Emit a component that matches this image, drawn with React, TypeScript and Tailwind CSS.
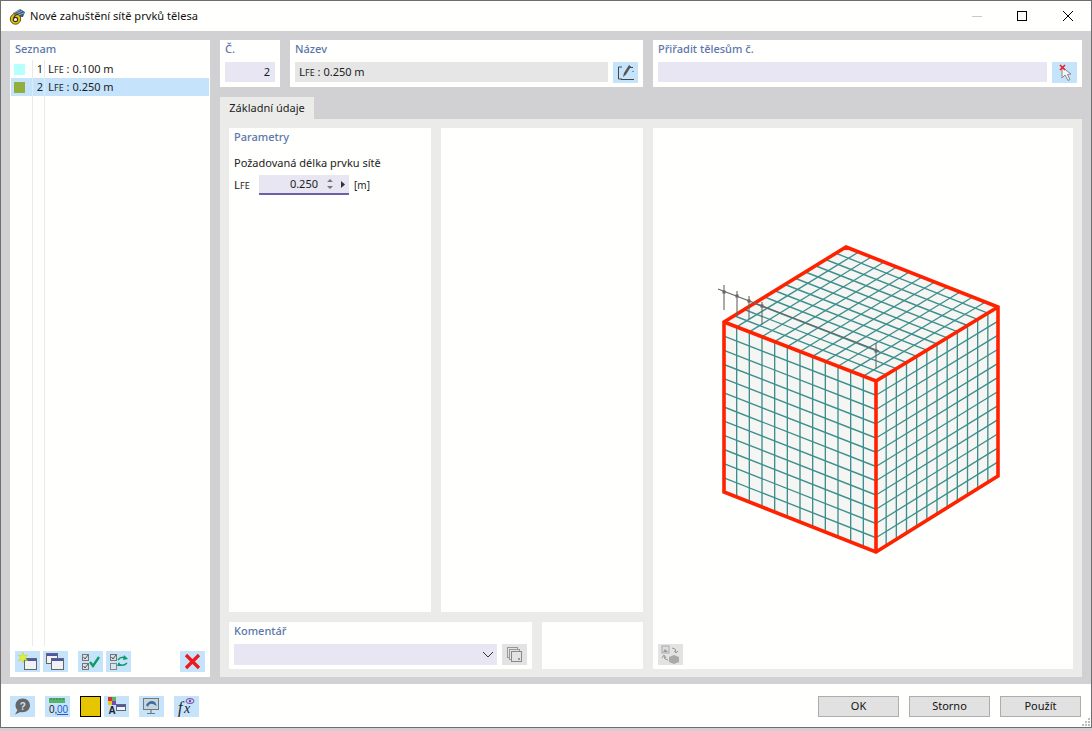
import React from "react";

type P = { x: number; y: number };
const V = {
  top: { x: 846, y: 247 },
  left: { x: 724, y: 322 },
  right: { x: 998, y: 307 },
  front: { x: 876, y: 381 },
  lb: { x: 724, y: 492 },
  rb: { x: 998, y: 476 },
  bottom: { x: 876, y: 552 },
};
const lerp = (a: P, b: P, t: number): P => ({ x: a.x + (b.x - a.x) * t, y: a.y + (b.y - a.y) * t });
const steps = Array.from({ length: 11 }, (_, i) => (i + 1) / 12);

function FaceGrid({ a, b, c, d }: { a: P; b: P; c: P; d: P }) {
  return (
    <>
      {steps.map((t) => {
        const p = lerp(a, b, t), q = lerp(d, c, t), r = lerp(a, d, t), s = lerp(b, c, t);
        return (
          <g key={t}>
            <line x1={p.x} y1={p.y} x2={q.x} y2={q.y} />
            <line x1={r.x} y1={r.y} x2={s.x} y2={s.y} />
          </g>
        );
      })}
    </>
  );
}

function Cube() {
  const poly = (...ps: P[]) => ps.map((p) => `${p.x},${p.y}`).join(" ");
  const ticks = [
    [724, 285, 310, 292],
    [737, 291, 316, 296],
    [749, 296, 319, 301],
    [762, 302, 324, 306],
    [876, 343, 368, 351],
  ];
  return (
    <svg viewBox="653 128 420 516" className="block w-[420px] h-[516px]">
      <polygon points={poly(V.top, V.right, V.front, V.left)} fill="#f5f6f3" />
      <polygon points={poly(V.left, V.front, V.bottom, V.lb)} fill="#f5f6f3" />
      <polygon points={poly(V.front, V.right, V.rb, V.bottom)} fill="#f5f6f3" />
      <g stroke="#3c8f8d" strokeWidth="1.35">
        <FaceGrid a={V.left} b={V.top} c={V.right} d={V.front} />
        <FaceGrid a={V.left} b={V.front} c={V.bottom} d={V.lb} />
        <FaceGrid a={V.front} b={V.right} c={V.rb} d={V.bottom} />
      </g>
      <g fill="none" stroke="#ff2200" strokeWidth="3.6" strokeLinejoin="miter">
        <polygon points={poly(V.top, V.right, V.rb, V.bottom, V.lb, V.left)} />
        <polyline points={poly(V.left, V.front, V.right)} />
        <line x1={V.front.x} y1={V.front.y} x2={V.bottom.x} y2={V.bottom.y} />
      </g>
      <g stroke="#666" strokeWidth="1.1" fill="#666">
        <line x1="718" y1="289" x2="879" y2="351" />
        {ticks.map(([x, a, b, m]) => (
          <g key={x}>
            <line x1={x} y1={a} x2={x} y2={b} />
            <rect x={x - 1} y={m - 1} width="2" height="2" />
          </g>
        ))}
      </g>
    </svg>
  );
}

function L() {
  return (
    <span className="text-[11.5px]">
      L<span className="text-[9px]">FE</span>
    </span>
  );
}

function IconBtn({ children, gray, className = "" }: { children?: React.ReactNode; gray?: boolean; className?: string }) {
  return (
    <div className={`w-[25px] h-[21px] shrink-0 flex items-center justify-center ${gray ? "bg-[#e3e3e3]" : "bg-[#c5e3fa]"} ${className}`}>
      {children}
    </div>
  );
}

const Svg = ({ children }: { children: React.ReactNode }) => (
  <svg viewBox="0 0 25 21" className="block w-[25px] h-[21px]">{children}</svg>
);

const Win = ({ x, y, w = 12, h = 11, fill = "#f0f2f5" }: { x: number; y: number; w?: number; h?: number; fill?: string }) => (
  <g>
    <rect x={x + 0.5} y={y + 0.5} width={w} height={h} fill={fill} stroke="#666" />
    <rect x={x + 1} y={y + 1} width={w - 1} height="2" fill="#4a55b8" />
  </g>
);

const Check = ({ x, y, c = "#555" }: { x: number; y: number; c?: string }) => (
  <g>
    <rect x={x + 0.5} y={y + 0.5} width="6" height="6" fill="#d8dde2" stroke="#777" />
    <path d={`M${x + 1.5} ${y + 3}l1.5 2 3-4`} stroke={c} strokeWidth="1" fill="none" />
  </g>
);

function AppIcon() {
  return (
    <svg viewBox="0 0 17 17" className="block w-[17px] h-[17px] shrink-0">
      <path d="M4 5 L11 1 L16 4 L14 9 L7 9 Z" fill="#3c5a80" />
      <path d="M5 5 L11 2 M7 6 L13 3 M9 7 L15 5" stroke="#9fc0dc" strokeWidth="0.8" />
      <circle cx="6.5" cy="11" r="5.2" fill="#e9c400" stroke="#5c5320" />
      <circle cx="6.5" cy="11.5" r="2.2" fill="#fff6c0" stroke="#333" strokeWidth="1.2" />
      <path d="M5 10 Q5.5 6.5 9 6.5" stroke="#333" strokeWidth="1.2" fill="none" />
    </svg>
  );
}

const Label = ({ children }: { children: React.ReactNode }) => (
  <div className="text-[11px] leading-[14px] font-medium text-[#5b76ac]">{children}</div>
);

function App() {
  return (
    <div className="w-[1092px] h-[731px] bg-[#d0d0d3] overflow-hidden text-[11px] text-[#1c1c1c] font-['Noto_Sans','Open_Sans',sans-serif]">
      <div className="relative w-[1092px] h-[728px] flex flex-col border border-[#6e6e6e] bg-[#d1d1d4]">
        {/* Title bar */}
        <div className="h-[30px] shrink-0 bg-[#fffffd] flex items-center pl-[8px]">
          <AppIcon />
          <div className="ml-[4px] text-[11.1px] text-[#111]">Nové zahuštění sítě prvků tělesa</div>
          <div className="flex-1" />
          <div className="w-[10px] h-px bg-[#c9c9c9] mr-[35px]" />
          <div className="w-[10px] h-[10px] border-[1.5px] border-black mr-[36px]" />
          <svg viewBox="0 0 10 10" className="block w-[10px] h-[10px] mr-[18px]">
            <path d="M0 0 L10 10 M10 0 L0 10" stroke="#000" strokeWidth="1" />
          </svg>
        </div>

        {/* Body */}
        <div className="flex-1 min-h-0 flex gap-[10px] pl-[9px] pr-[9px] pt-[9px] pb-[7px]">
          {/* Left list */}
          <div className="w-[200px] shrink-0 bg-[#fffffd] flex flex-col">
            <div className="px-[5px] pt-[2px] h-[20px]">
              <Label>Seznam</Label>
            </div>
            <div className="flex-1 min-h-0 flex flex-col px-px">
              <ListRow color="#b5ffff" n="1" text=" : 0.100 m" />
              <ListRow color="#94ae3e" n="2" text=" : 0.250 m" selected />
              <div className="flex-1 grid grid-cols-[22px_12px_1fr]">
                <div className="border-r border-[#e9e9e9]" />
                <div className="border-r border-[#e9e9e9]" />
                <div />
              </div>
            </div>
            <div className="h-[31px] shrink-0 flex pl-[5px] pt-[5px]">
              <IconBtn>
                <Svg>
                  <Win x={9} y={7} w={12} h={11} />
                  <path d="M8 1 L9.2 4.6 L13 4 L10.4 6.8 L12.6 10 L9 8.8 L8 12 L6.6 8.8 L3 10 L5.4 6.8 L3 4 L6.8 4.6 Z" fill="#dcef3c" stroke="#b7c92e" strokeWidth="0.4" />
                </Svg>
              </IconBtn>
              <IconBtn className="ml-[3px]">
                <Svg>
                  <Win x={3} y={2} w={11} h={10} />
                  <Win x={8} y={7} w={12} h={11} />
                </Svg>
              </IconBtn>
              <IconBtn className="ml-[10px]">
                <Svg>
                  <Check x={4} y={3} />
                  <Check x={4} y={12} />
                  <path d="M12 11 L15 15 L21 6" stroke="#0d9c6a" strokeWidth="2.4" fill="none" />
                </Svg>
              </IconBtn>
              <IconBtn className="ml-[3px]">
                <Svg>
                  <Check x={4} y={3} />
                  <rect x="4.5" y="12.5" width="6" height="6" fill="#d8e4ee" stroke="#888" />
                  <path d="M12 9 Q15 5 20 7 M12 13 Q17 16 21 12" stroke="#0d9c6a" strokeWidth="1.5" fill="none" />
                  <path d="M18 4 L22 8 L17 9 Z M13 11 L11 15 L15 15 Z" fill="#0d9c6a" />
                </Svg>
              </IconBtn>
              <IconBtn className="ml-[49px]">
                <Svg>
                  <path d="M6 4 L19 17 M19 4 L6 17" stroke="#f01818" strokeWidth="3.2" />
                </Svg>
              </IconBtn>
            </div>
          </div>

          {/* Right */}
          <div className="flex-1 min-w-0 flex flex-col">
            <div className="h-[47px] shrink-0 flex gap-[10px]">
              <div className="w-[60px] bg-[#fffffd] px-[5px] pt-[2px]">
                <Label>Č.</Label>
                <div className="mt-[6px] h-[20px] bg-[#e7e6f2] flex items-center justify-end pr-[5px]">2</div>
              </div>
              <div className="w-[353px] bg-[#fffffd] px-[5px] pt-[2px]">
                <Label>Název</Label>
                <div className="mt-[6px] flex gap-[5px]">
                  <div className="flex-1 h-[20px] bg-[#e6e6e6] flex items-center px-[4px]">
                    <span><L /> : 0.250 m</span>
                  </div>
                  <IconBtn>
                    <Svg>
                      <path d="M9 5 H5.5 V17 H9 M8 17.5 H21 M17 5.5 H20 M20 9 V10" stroke="#444" strokeWidth="1" fill="none" />
                      <path d="M10 15 L11 11 L16 3 L18 4.5 L13 12.5 Z" fill="#555" />
                    </Svg>
                  </IconBtn>
                </div>
              </div>
              <div className="flex-1 bg-[#fffffd] px-[5px] pt-[2px]">
                <Label>Přiřadit tělesům č.</Label>
                <div className="mt-[6px] flex gap-[5px]">
                  <div className="flex-1 h-[20px] bg-[#e7e6f2]" />
                  <IconBtn>
                    <Svg>
                      <path d="M10 5 L10 16 L13 13 L16 18.5 L18 17.5 L15.5 12.5 L19 12 Z" fill="#f4f4f4" stroke="#888" strokeWidth="1" />
                      <path d="M8 3 L13 8 M13 3 L8 8" stroke="#ee1c25" strokeWidth="1.6" />
                    </Svg>
                  </IconBtn>
                </div>
              </div>
            </div>

            {/* Tab */}
            <div className="mt-[10px] h-[22px] shrink-0 flex">
              <div className="w-[94px] bg-[#ebecea] flex items-center justify-center text-[#222]">Základní údaje</div>
            </div>

            <div className="flex-1 min-h-0 bg-[#ebecea] flex gap-[10px] pl-[9px] pr-[9px] pt-[9px] pb-[8px]">
              <div className="w-[414px] shrink-0 flex flex-col gap-[10px]">
                <div className="flex-1 min-h-0 flex gap-[10px]">
                  <div className="w-[202px] bg-[#fffffd] px-[5px] pt-[2px]">
                    <Label>Parametry</Label>
                    <div className="mt-[12px] leading-[14px] text-[#1c1c1c]">Požadovaná délka prvku sítě</div>
                    <div className="mt-[5px] flex items-center">
                      <div className="w-[25px]"><L /></div>
                      <div className="w-[90px] h-[20px] bg-[#e7e6f2] border-b-2 border-[#6c5fa7] flex items-center justify-end">
                        <span>0.250</span>
                        <svg viewBox="0 0 8 12" className="block w-[8px] h-[12px] ml-[8px] mr-[7px]">
                          <path d="M4 1 L7 4 H1 Z M4 11 L7 8 H1 Z" fill="#777" />
                        </svg>
                        <svg viewBox="0 0 4 7" className="block w-[4px] h-[7px] mr-[4px]">
                          <path d="M0 0 L4 3.5 L0 7 Z" fill="#333" />
                        </svg>
                      </div>
                      <div className="ml-[5px] text-[10px]">[m]</div>
                    </div>
                  </div>
                  <div className="w-[202px] bg-[#fffffd]" />
                </div>
                <div className="h-[47px] shrink-0 flex gap-[10px]">
                  <div className="w-[303px] bg-[#fffffd] px-[5px] pt-[2px]">
                    <Label>Komentář</Label>
                    <div className="mt-[6px] flex gap-[5px]">
                      <div className="flex-1 h-[21px] bg-[#e7e6f2] flex items-center justify-end pr-[3px]">
                        <svg viewBox="0 0 12 7" className="block w-[12px] h-[7px]">
                          <path d="M1 1 L6 6 L11 1" stroke="#333" strokeWidth="1" fill="none" />
                        </svg>
                      </div>
                      <IconBtn gray>
                        <Svg>
                          <rect x="5.5" y="3.5" width="10" height="10" fill="none" stroke="#999" />
                          <rect x="7.5" y="5.5" width="10" height="10" fill="#e3e3e3" stroke="#999" />
                          <rect x="9.5" y="7.5" width="10" height="10" fill="#e3e3e3" stroke="#888" />
                          <rect x="16" y="14" width="2" height="2" fill="#999" />
                        </Svg>
                      </IconBtn>
                    </div>
                  </div>
                  <div className="flex-1 bg-[#fffffd]" />
                </div>
              </div>

              <div className="flex-1 bg-[#fffffd] flex flex-col">
                <Cube />
                <div className="pl-[5px]">
                  <IconBtn gray>
                    <Svg>
                      <rect x="4" y="2" width="7" height="7" fill="#ddd" stroke="#aaa" />
                      <path d="M5 8 L7 5 L10 8 Z" fill="#999" />
                      <path d="M14 4 Q18 4 18 8 M16 7 L18 9 L20 7 M10 16 Q6 16 6 12 M4 14 L6 11 L8 14" stroke="#999" fill="none" />
                      <path d="M11 13 L16 11 L21 13 V18 L16 20 L11 18 Z" fill="#aaa" />
                    </Svg>
                  </IconBtn>
                </div>
              </div>
            </div>
          </div>
        </div>

        {/* Footer */}
        <div className="h-[43px] shrink-0 bg-[#fffffd] flex items-center pl-[9px] pr-[10px] pt-px">
          <IconBtn>
            <Svg>
              <path d="M13 2.5 C8 2.5 5.5 6 5.5 9.5 C5.5 11.5 6.5 13 7.5 14 L5 18.5 L10.5 16 C15 17 20 14.5 20 9.5 C20 5.5 17 2.5 13 2.5 Z" fill="#666" />
              <text x="12.8" y="13.5" textAnchor="middle" fontSize="10" fontWeight="700" fill="#c5e3fa" fontFamily="'Liberation Sans', sans-serif">?</text>
            </Svg>
          </IconBtn>
          <IconBtn className="ml-[10px]">
            <Svg>
              <rect x="4" y="2" width="16" height="5" fill="#58b368" />
              <path d="M6 2v2M9 2v2M12 2v2M15 2v2M18 2v2" stroke="#2c7a40" strokeWidth="0.8" />
              <text x="4" y="17" fontSize="10" fill="#222" fontFamily="'Liberation Sans', sans-serif">0,</text>
              <text x="12" y="17" fontSize="10" fill="#1d5fd0" textDecoration="underline" fontFamily="'Liberation Sans', sans-serif">00</text>
            </Svg>
          </IconBtn>
          <div className="ml-[10px] w-[21px] h-[21px] bg-[#e6c600] border border-black" />
          <IconBtn className="ml-[3px]">
            <Svg>
              <rect x="4" y="1" width="4" height="4" fill="#d83030" />
              <rect x="8" y="1" width="4" height="4" fill="#58b848" />
              <rect x="4" y="5" width="4" height="4" fill="#e8c820" />
              <rect x="8" y="5" width="4" height="4" fill="#8840c0" />
              <text x="8" y="18" textAnchor="middle" fontSize="10" fontWeight="700" fill="#222" fontFamily="'Liberation Sans', sans-serif">A</text>
              <Win x={12} y={8} w={9} h={6} />
            </Svg>
          </IconBtn>
          <IconBtn className="ml-[10px]">
            <Svg>
              <rect x="4.5" y="2.5" width="15" height="11" fill="#c5d5e2" stroke="#777" />
              <path d="M7 9 Q11 3 16 6 L18 10 L14 8 Q10 7 9 11 Z" fill="#3f6d99" />
              <path d="M12 14 V17 M8 17.5 H16" stroke="#777" strokeWidth="1.2" />
            </Svg>
          </IconBtn>
          <IconBtn className="ml-[10px]">
            <Svg>
              <text x="4" y="17" fontSize="16" fontStyle="italic" fill="#222" fontFamily="'Liberation Serif', serif">f</text>
              <text x="10" y="17" fontSize="14" fontStyle="italic" fill="#222" fontFamily="'Liberation Serif', serif">x</text>
              <ellipse cx="16" cy="5" rx="4" ry="2.5" fill="#d8d0ea" stroke="#6a4fa0" />
              <circle cx="16" cy="5" r="1.2" fill="#6a4fa0" />
            </Svg>
          </IconBtn>
          <div className="flex-1" />
          <FootBtn>OK</FootBtn>
          <FootBtn className="ml-[10px]">Storno</FootBtn>
          <FootBtn className="ml-[10px]">Použít</FootBtn>
        </div>
        <svg viewBox="0 0 10 10" className="absolute right-0 bottom-0 w-[10px] h-[10px]">
          <path d="M7 1h2v2H7zM4 4h2v2H4zM7 4h2v2H7zM1 7h2v2H1zM4 7h2v2H4zM7 7h2v2H7z" fill="#bdbdbd" />
        </svg>
      </div>
    </div>
  );
}

function ListRow({ color, n, text, selected }: { color: string; n: string; text: string; selected?: boolean }) {
  return (
    <div className={`h-[18px] shrink-0 grid grid-cols-[22px_12px_1fr] items-stretch ${selected ? "bg-[#c5e4fb]" : ""}`}>
      <div className={`flex items-center pl-[3px] border-r ${selected ? "border-[#dcebf7]" : "border-[#e9e9e9]"}`}>
        <div className="w-[11px] h-[11px]" style={{ backgroundColor: color }} />
      </div>
      <div className={`flex items-center justify-end pr-px border-r ${selected ? "border-[#dcebf7]" : "border-[#e9e9e9]"}`}>{n}</div>
      <div className="flex items-center pl-[3px] whitespace-pre"><span><L />{text}</span></div>
    </div>
  );
}

function FootBtn({ children, className = "" }: { children: React.ReactNode; className?: string }) {
  return (
    <div className={`w-[81px] h-[21px] bg-[#e1e1e1] border border-[#adadad] flex items-center justify-center text-[#111] ${className}`}>
      {children}
    </div>
  );
}

export default App;
